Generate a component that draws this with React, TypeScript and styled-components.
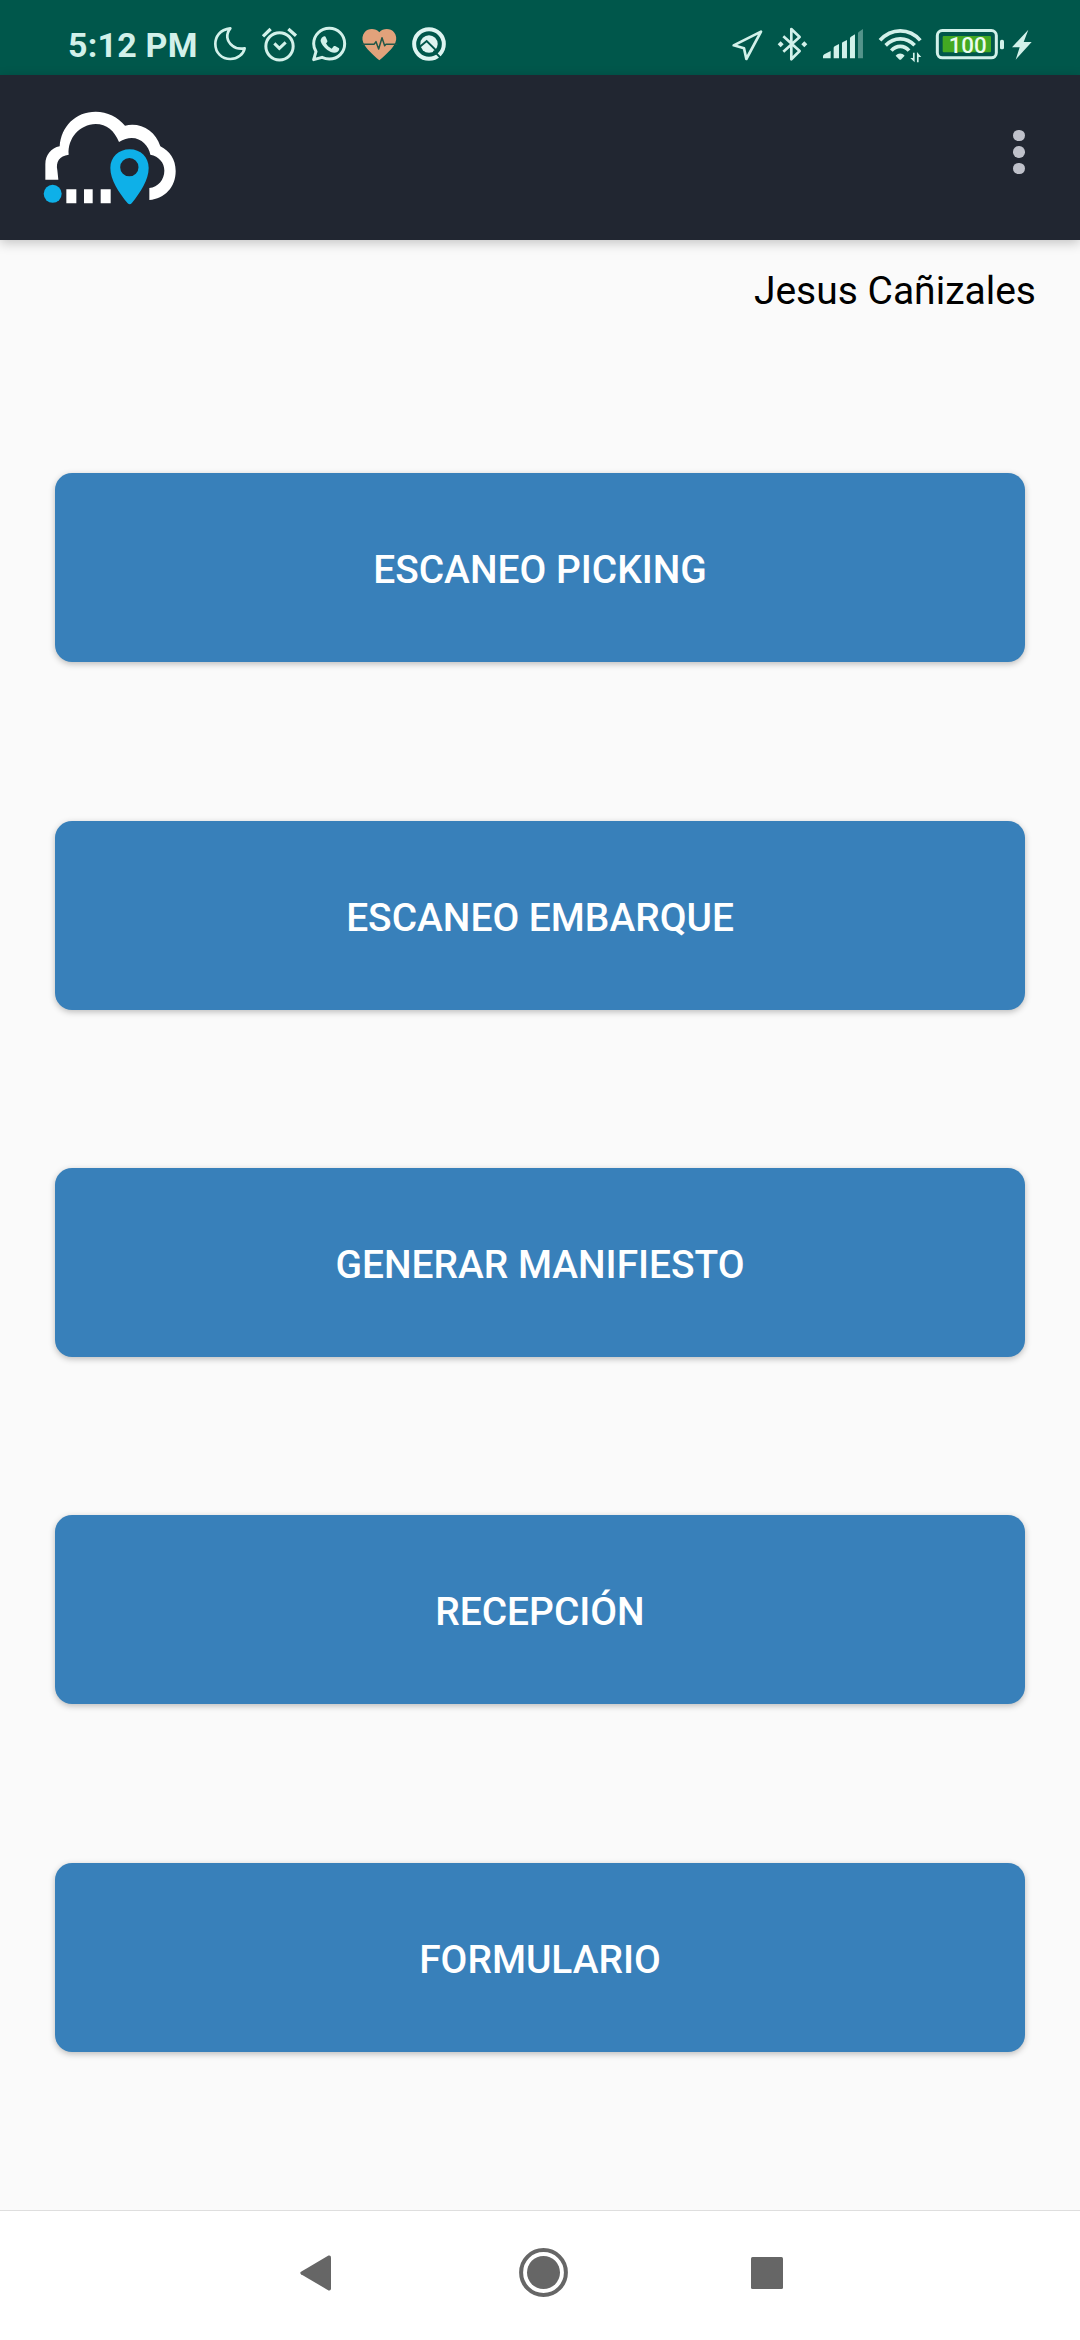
import React from 'react';
import styled, { createGlobalStyle } from 'styled-components';

const GlobalStyle = createGlobalStyle`
  * { box-sizing: border-box; }
  html, body { margin: 0; padding: 0; background: #fafafa; }
  body { font-family: Roboto, "Noto Sans", sans-serif; }
`;

const TINT = '#d2f1ea';

const Screen = styled.div`
  width: 1080px;
  height: 2340px;
  display: flex;
  flex-direction: column;
  background: #fafafa;
  overflow: hidden;
`;

const StatusBar = styled.header`
  height: 75px;
  flex: none;
  display: flex;
  justify-content: space-between;
  align-items: flex-start;
  padding: 26.7px 48.5px 0 68px;
  background: #00574b;
`;

const StatusGroup = styled.div<{ $gap: number }>`
  display: flex;
  align-items: flex-start;
  gap: ${(p) => p.$gap}px;
`;

const Clock = styled.span`
  width: 130.5px;
  height: 34px;
  line-height: 37px;
  font-size: 34px;
  font-weight: 700;
  letter-spacing: 0.2px;
  white-space: nowrap;
  color: ${TINT};
`;

const Glyph = styled.svg<{ $w: number }>`
  display: block;
  flex: none;
  width: ${(p) => p.$w}px;
  height: 34px;
  fill: none;
  stroke: none;
  overflow: visible;
`;

const AppBar = styled.div`
  height: 165px;
  flex: none;
  display: flex;
  justify-content: space-between;
  align-items: flex-start;
  padding: 35.7px 55px 0 43.3px;
  background: #212631;
  box-shadow: 0 3px 11px rgba(0, 0, 0, 0.22);
  z-index: 1;
`;

const Logo = styled.svg`
  display: block;
  width: 132.7px;
  height: 94px;
`;

const MenuButton = styled.button`
  display: flex;
  flex-direction: column;
  gap: 5px;
  margin: 19px 0 0;
  padding: 0;
  border: 0;
  background: none;
`;

const Dot = styled.i`
  width: 11.6px;
  height: 11.6px;
  border-radius: 50%;
  background: #bfc1ca;
`;

const UserName = styled.div`
  height: 75px;
  flex: none;
  padding: 29px 44px 0 0;
  line-height: 45px;
  font-size: 39px;
  text-align: right;
  color: #000;
`;

const Menu = styled.main`
  flex: 1;
  display: flex;
  flex-direction: column;
  justify-content: space-evenly;
  padding: 0 55px;
`;

const MenuItem = styled.button`
  height: 189px;
  display: flex;
  align-items: center;
  justify-content: center;
  padding: 4px 0 0;
  border: 0;
  border-radius: 17px;
  background: #3880ba;
  box-shadow: 0 2px 6px rgba(0, 0, 0, 0.25);
  font-family: inherit;
  font-size: 38.9px;
  font-weight: 500;
  color: #fff;
`;

const NavBar = styled.nav`
  height: 130px;
  flex: none;
  display: flex;
  justify-content: space-between;
  align-items: center;
  padding: 0 297px 6px 300px;
  border-top: 1px solid #dedede;
  background: #fff;
`;

const NavIcon = styled.svg<{ $w: number; $h: number; $shift?: number }>`
  display: block;
  width: ${(p) => p.$w}px;
  height: ${(p) => p.$h}px;
  margin-left: ${(p) => p.$shift ?? 0}px;
  fill: #666;
`;

const Moon = () => (
  <Glyph $w={32} viewBox="42 50 96 102">
    <path d="M91 54C58 58 46 80 46 101c0 27 20 45 45 45 23 0 39-15 43-32-12 2-26 1-37-8-18-14-20-35-6-52z" stroke={TINT} strokeWidth="8" strokeLinejoin="round" />
  </Glyph>
);

const Alarm = () => (
  <Glyph $w={35} viewBox="184 50 105 102">
    <g stroke={TINT} strokeWidth="9">
      <circle cx="236.500" cy="108" r="41" />
      <path d="M187 78l23-22M263 56l23 20" strokeWidth="10" />
      <path d="M221 99l15 15 19-18" />
    </g>
  </Glyph>
);

const WhatsApp = () => (
  <Glyph $w={34} viewBox="336 50 102 102">
    <path d="M341 148l7-24c-5-8-7-15-7-24 0-26 21-46 47-46s46 20 46 46-20 46-46 46c-8 0-15-2-22-5z" stroke={TINT} strokeWidth="9" strokeLinejoin="round" />
    <path d="M368 80c4-3 8-3 10 2l4 9c1 3-1 5-4 8 4 8 9 12 17 16l6-7c2-2 4-1 6 0l9 5c4 2 0 9-3 11-9 7-21 2-31-5-11-8-18-18-20-26-1-5 2-10 6-13z" fill={TINT} />
  </Glyph>
);

const Heart = () => (
  <Glyph $w={35} viewBox="485 50 105 102">
    <path d="M537 66c11-13 34-13 44 0 7 9 9 20 4 31-8 18-28 35-48 53-20-18-40-35-48-53-5-11-3-22 4-31 10-13 33-13 44 0z" fill="#e2a27b" />
    <path d="M484 102h37l6-8 8 22 10-34 8 24 4-4h34" stroke="#215748" strokeWidth="4.500" strokeLinejoin="round" />
  </Glyph>
);

const QuickRing = () => (
  <Glyph $w={34} viewBox="636 50 102 102">
    <circle cx="687" cy="101" r="44.500" stroke="#def5f1" strokeWidth="12" />
    <circle cx="687" cy="101" r="26" fill="#def5f1" />
    <path d="M656 112l24-20 32 32" stroke="#00574b" strokeWidth="6" />
    <path d="M701 121l24 25" stroke="#00574b" strokeWidth="6" />
  </Glyph>
);

const LocationArrow = () => (
  <Glyph $w={30.7} viewBox="66 50 92 102">
    <path d="M153 64L71 105l31 9 7 32z" stroke={TINT} strokeWidth="8" strokeLinejoin="round" />
  </Glyph>
);

const Bluetooth = () => (
  <Glyph $w={29.3} viewBox="206 50 88 102">
    <path d="M222 78l49 44-25 25V56l25 24-49 44" stroke={TINT} strokeWidth="8" strokeLinejoin="round" />
    <path d="M214 93l9 9-9 9-9-9zM285 93l9 9-9 9-9-9z" fill={TINT} />
  </Glyph>
);

const Signal = () => (
  <Glyph $w={40.3} viewBox="336 50 121 102">
    <g fill={TINT}>
      <path d="M336 144v-7q1-3 4-5l19-10v22z" />
      <path d="M368 144v-32q0-2 3-4l13-7v43zM393 144V99q0-3 3-4l12-6v55zM417 144V84q0-3 3-5l12-7v72z" />
      <path d="M441 144V69q0-3 3-5l12-8v88z" opacity=".4" />
    </g>
  </Glyph>
);

const Wifi = () => (
  <Glyph $w={42.3} viewBox="54 50 127 102">
    <g stroke={TINT} strokeWidth="11">
      <path d="M57 90c34-38 88-38 121 0" />
      <path d="M74 105c26-26 62-26 87 0" />
      <path d="M91 121c15-17 39-17 53 0" />
    </g>
    <path d="M104 136c8-9 19-9 27 0l-10 11q-3 3-7 0z" fill={TINT} />
    <path d="M161 127v29l-13-13h8v-16zM168 156v-31l13 15h-8v16z" fill={TINT} />
  </Glyph>
);

const Battery = () => (
  <Glyph $w={68} viewBox="228 50 204 102">
    <rect x="232" y="60.500" width="177" height="82" rx="15" stroke={TINT} strokeWidth="9" />
    <rect x="248" y="77" width="145" height="49" rx="3" fill="#43a922" />
    <rect x="420" y="88" width="12" height="29" rx="5" fill={TINT} />
    <text x="323" y="128" textAnchor="middle" fontSize="67" fontWeight="500" fill="#e9fbef">100</text>
  </Glyph>
);

const Bolt = () => (
  <Glyph $w={19.7} viewBox="455 50 59 102">
    <path d="M504 58l-49 53h23l-12 37 48-53h-24z" fill={TINT} />
  </Glyph>
);

const CloudLogo = () => (
  <Logo viewBox="70 62 398 282">
    <path
      fill="#fff"
      d="M77 268V222C77 194 94 173 120 168C124 108 168 64 228 64C263 64 295 80 316 106C362 95 407 120 422 168C450 182 468 207 468 242C468 291 435 325 389 329V293C415 290 434 268 434 241C434 217 418 198 392 193C386 158 347 124 298 155C284 121 261 101 228 101C180 102 143 144 147 193C119 197 108 214 113 240L116 268Z"
    />
    <circle cx="99" cy="310.500" r="27" fill="#0eb0e8" />
    <path fill="#fff" d="M140 297h30v42h-30zM193 297h26v42h-26zM243 297h30v42h-30z" />
    <path fill="#0eb0e8" fillRule="evenodd" d="M330 177c33 0 57 24 57 56 0 36-25 73-51 106q-6 6-12 0c-27-33-52-70-52-106 0-32 25-56 58-56zm-1 26a27 27 0 1 0 0 55 27 27 0 0 0 0-55z" />
  </Logo>
);

const items = ['ESCANEO PICKING', 'ESCANEO EMBARQUE', 'GENERAR MANIFIESTO', 'RECEPCIÓN', 'FORMULARIO'];

export default function App() {
  return (
    <>
      <GlobalStyle />
      <Screen>
        <StatusBar>
          <StatusGroup $gap={15.5}>
            <Clock>5:12 PM</Clock>
            <Moon />
            <Alarm />
            <WhatsApp />
            <Heart />
            <QuickRing />
          </StatusGroup>
          <StatusGroup $gap={15.3}>
            <LocationArrow />
            <Bluetooth />
            <Signal />
            <Wifi />
            <StatusGroup $gap={7.7}>
              <Battery />
              <Bolt />
            </StatusGroup>
          </StatusGroup>
        </StatusBar>
        <AppBar>
          <CloudLogo />
          <MenuButton aria-label="Menú">
            <Dot />
            <Dot />
            <Dot />
          </MenuButton>
        </AppBar>
        <UserName>Jesus Cañizales</UserName>
        <Menu>
          {items.map((label) => (
            <MenuItem key={label}>{label}</MenuItem>
          ))}
        </Menu>
        <NavBar>
          <NavIcon $w={31} $h={36} viewBox="0 0 31 36">
            <path d="M1 16.800L28.500 .6Q31 0 31 2.500v31Q31 36 28.500 35.400L1 19.200Q-.5 18 1 16.800z" />
          </NavIcon>
          <NavIcon $w={49} $h={49} $shift={4.6} viewBox="0 0 49 49">
            <circle cx="24.500" cy="24.500" r="22.400" fill="none" stroke="#666" strokeWidth="4" />
            <circle cx="24.500" cy="24.500" r="16.500" />
          </NavIcon>
          <NavIcon $w={32} $h={32} viewBox="0 0 32 32">
            <rect width="32" height="32" rx="1.500" />
          </NavIcon>
        </NavBar>
      </Screen>
    </>
  );
}
